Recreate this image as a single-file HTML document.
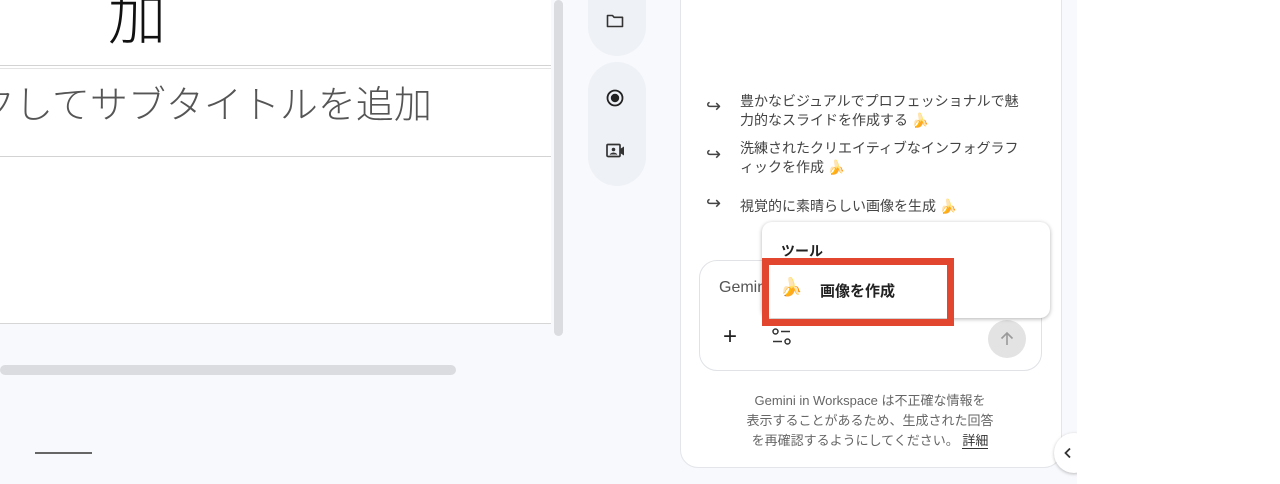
<!DOCTYPE html>
<html><head><meta charset="utf-8"><style>
*{margin:0;padding:0;box-sizing:border-box}
body{width:1280px;height:484px;overflow:hidden;background:#fff;position:relative;font-family:"Liberation Sans","Noto Sans CJK JP",sans-serif}
.abs{position:absolute}
.bg{left:0;top:0;width:1077px;height:484px;background:#f8f9fc}
.slide{left:0;top:0;width:551px;height:324px;background:#fff;border-bottom:1px solid #d6d6d6}
.hl{left:0;width:551px;height:1px;background:#d3d3d3}
.pill{left:588px;width:58px;background:#eef1f6;border-radius:29px}
.panel{left:680px;top:-20px;width:382px;height:488px;background:#fff;border:1px solid #e3e5ea;border-radius:18px}
.sug{left:706px;font-size:14px;color:#444;line-height:19px}
.sug .arr{position:absolute;left:0;font-size:18px;color:#444}
.sug .t{position:absolute;left:34px;width:292px}
</style></head><body>
<div class="abs bg"></div>
<div class="abs slide"></div>
<div class="abs hl" style="top:65px"></div>
<div class="abs hl" style="top:68px;background:#e4e4e4"></div>
<div class="abs hl" style="top:156px"></div>
<div class="abs" style="left:108px;top:-18px;font-size:58px;color:#111;font-family:'Noto Sans CJK JP',sans-serif;font-weight:300;line-height:64px">加</div>
<div class="abs" style="left:-23px;top:78px;font-size:38px;color:#555;line-height:48px;white-space:nowrap;font-family:'Noto Sans CJK JP',sans-serif;font-weight:300">クしてサブタイトルを追加</div>
<div class="abs" style="left:554px;top:0;width:9px;height:336px;background:#dadce0;border-radius:5px"></div>
<div class="abs" style="left:0;top:365px;width:456px;height:10px;background:#dadce0;border-radius:5px"></div>
<div class="abs" style="left:35px;top:452px;width:57px;height:2px;background:#666"></div>

<div class="abs pill" style="top:-30px;height:86px"></div>
<div class="abs pill" style="top:62px;height:124px"></div>
<svg class="abs" style="left:605px;top:11px" width="20" height="20" viewBox="0 0 20 20"><path d="M2.5 4.5h5l1.5 1.8h8.5v9.2h-15z" fill="none" stroke="#333" stroke-width="1.6" stroke-linejoin="round"/></svg>
<svg class="abs" style="left:605px;top:88px" width="20" height="20" viewBox="0 0 20 20"><circle cx="10" cy="10" r="7.5" fill="none" stroke="#222" stroke-width="1.8"/><circle cx="10" cy="10" r="4.2" fill="#222"/></svg>
<svg class="abs" style="left:605px;top:141px" width="22" height="20" viewBox="0 0 22 20"><rect x="2" y="3.5" width="13" height="12" rx="1" fill="none" stroke="#333" stroke-width="1.7"/><circle cx="8.5" cy="8.5" r="1.8" fill="#333"/><path d="M5 13.5q3.5-3 7 0" fill="#333" stroke="#333"/><path d="M15 8l4-2.5v9L15 12z" fill="#333"/></svg>

<div class="abs panel"></div>
<div class="abs sug" style="top:92px;width:340px;height:40px"><span class="arr" style="top:5px">↪</span><div class="t">豊かなビジュアルでプロフェッショナルで魅力的なスライドを作成する 🍌</div></div>
<div class="abs sug" style="top:139px;width:340px;height:40px"><span class="arr" style="top:6px">↪</span><div class="t">洗練されたクリエイティブなインフォグラフィックを作成 🍌</div></div>
<div class="abs sug" style="top:197px;width:340px;height:22px"><span class="arr" style="top:-3px">↪</span><div class="t">視覚的に素晴らしい画像を生成 🍌</div></div>

<div class="abs" style="left:699px;top:260px;width:343px;height:111px;border:1px solid #e0e2e6;border-radius:18px;background:#fff"></div>
<div class="abs" style="left:719px;top:279px;font-size:16px;color:#555">Gemini</div>
<div class="abs" style="left:723px;top:322px;font-size:24px;color:#222;line-height:30px;font-weight:300">+</div>
<svg class="abs" style="left:771px;top:327px" width="22" height="20" viewBox="0 0 22 20"><circle cx="4.5" cy="4.5" r="2.5" fill="none" stroke="#333" stroke-width="1.5"/><path d="M10 4.5h9M2 14.5h9" stroke="#333" stroke-width="1.6"/><circle cx="16.5" cy="14.5" r="2.5" fill="none" stroke="#333" stroke-width="1.5"/></svg>
<div class="abs" style="left:988px;top:320px;width:38px;height:38px;border-radius:50%;background:#e3e3e3"></div>
<svg class="abs" style="left:997px;top:329px" width="20" height="20" viewBox="0 0 20 20"><path d="M10 16V4M4.5 9.5L10 4l5.5 5.5" fill="none" stroke="#9a9a9a" stroke-width="1.6"/></svg>

<div class="abs" style="left:762px;top:222px;width:288px;height:96px;background:#fff;border-radius:10px;box-shadow:0 1px 4px rgba(0,0,0,.3)"></div>
<div class="abs" style="left:781px;top:241px;font-size:14px;font-weight:bold;color:#222">ツール</div>
<div class="abs" style="left:762px;top:258px;width:192px;height:68px;border:7px solid #e2462f"></div>
<div class="abs" style="left:780px;top:277px;font-size:18px">🍌</div>
<div class="abs" style="left:820px;top:280px;font-size:15px;font-weight:bold;color:#222">画像を作成</div>

<div class="abs" style="left:700px;top:391px;width:340px;text-align:center;font-size:13px;line-height:20px;color:#666">Gemini in Workspace は不正確な情報を<br>表示することがあるため、生成された回答<br>を再確認するようにしてください。 <span style="color:#333;border-bottom:1px solid #333">詳細</span></div>

<div class="abs" style="left:1054px;top:433px;width:40px;height:40px;border-radius:50%;background:#fff;box-shadow:0 1px 3px rgba(0,0,0,.25)"></div>
<svg class="abs" style="left:1061px;top:446px" width="14" height="14" viewBox="0 0 14 14"><path d="M9 2.5L4.5 7 9 11.5" fill="none" stroke="#333" stroke-width="1.8"/></svg>
<div class="abs" style="left:1077px;top:0;width:203px;height:484px;background:#fff"></div>
</body></html>
